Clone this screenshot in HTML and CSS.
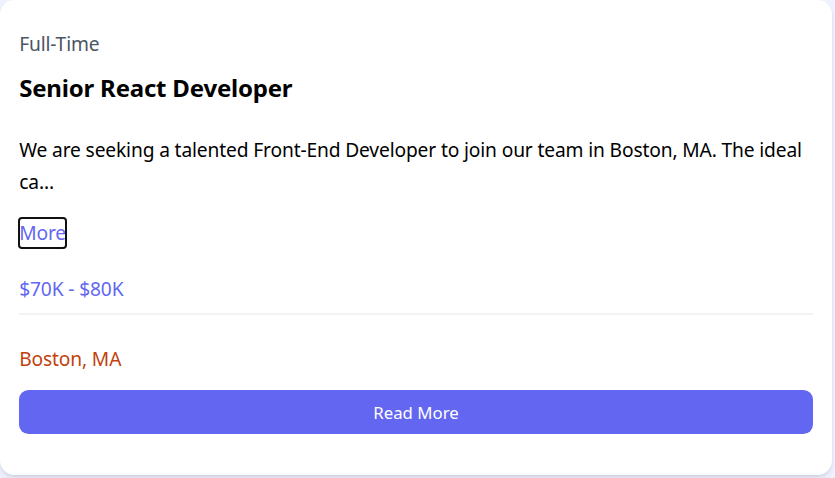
FILE: index.html
```html
<!DOCTYPE html>
<html lang="en">
<head>
<meta charset="utf-8">
<title>Job Listing</title>
<link rel="stylesheet" href="styles.css">
</head>
<body>
  <div class="card">
    <div class="card-body">
      <div class="head">
        <div class="type">Full-Time</div>
        <h3 class="title">Senior React Developer</h3>
      </div>
      <div class="desc">We are seeking a talented Front-End Developer to join our team in Boston, MA. The ideal ca...</div>
      <button class="more" type="button">More</button>
      <h3 class="salary">$70K - $80K</h3>
      <div class="divider"></div>
      <div class="foot">
        <div class="location">Boston, MA</div>
        <a class="read" href="#">Read More</a>
      </div>
    </div>
  </div>
</body>
</html>
```
FILE: styles.css
```css
* { box-sizing: border-box; }
html, body { margin: 0; padding: 0; }
body {
  background: #eef2ff;
  font-family: "Noto Sans", "Open Sans", sans-serif;
  font-size: 19.2px;
  line-height: 30px;
  letter-spacing: -0.14px;
  color: #000;
  width: 835px;
  height: 478px;
  overflow: hidden;
}
.card {
  width: 832px;
  background: #fff;
  border-radius: 14.4px;
  box-shadow: 0 4px 6px -1px rgba(0,0,0,.1), 0 2px 4px -2px rgba(0,0,0,.1);
}
.card-body { padding: 19.2px; }
.head { margin-bottom: 29.6px; }
.type { color: #4b5563; margin: 9.6px 0 12px; }
.title { margin: 0; font-size: 24px; line-height: 33.6px; font-weight: 700; letter-spacing: -0.2px; }
.desc { line-height: 32px; margin-bottom: 20px; }
.more {
  display: block;
  height: 30px;
  background: none;
  border: 0;
  padding: 0;
  font: inherit;
  letter-spacing: inherit;
  line-height: 30px;
  color: #6366f1;
  margin-bottom: 26px;
  outline: 2px solid #111;
  outline-offset: -1px;
  border-radius: 3px;
  cursor: pointer;
}
.salary { margin: 0 0 9px; font-size: 19.2px; font-weight: 400; color: #6366f1; line-height: 30px; }
.divider { border: 1px solid #f3f4f6; margin-bottom: 29px; }
.foot { display: flex; flex-direction: column; margin-bottom: 21.8px; }
.location { color: #c2410c; margin-bottom: 16px; }
.read {
  display: block;
  height: 44px;
  background: #6366f1;
  color: #fff;
  text-decoration: none;
  border-radius: 9.6px;
  text-align: center;
  font-size: 16.8px;
  letter-spacing: 0;
  line-height: 24px;
  padding: 11px 19.2px 9px;
}
```
